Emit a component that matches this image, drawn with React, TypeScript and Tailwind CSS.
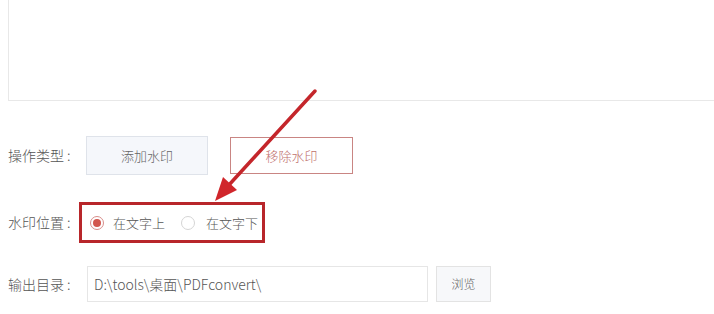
import React from "react";

const font = { fontFamily: '"Microsoft YaHei", "Noto Sans CJK SC", "Noto Sans", sans-serif' };

export default function App() {
  return (
    <div className="relative w-[714px] h-[314px] overflow-hidden bg-white text-[#555] font-light" style={font}>
      <div className="ml-[8px] h-[101px] border-l border-b border-[#e8e8e8]" />

      <div className="mt-[35px] flex items-center pl-[8px] h-[39px]">
        <div className="w-[78px] text-[14px] text-[#555]">操作类型 :</div>
        <div className="w-[122px] h-[39px] flex items-center justify-center bg-[#f5f7fb] border border-[#dfe3ea] text-[13px] text-[#666]">
          添加水印
        </div>
        <div className="ml-[22px] w-[123px] h-[37px] flex items-center justify-center bg-white border border-[#c98583] text-[13px] text-[#c0706c]">
          移除水印
        </div>
      </div>

      <div className="mt-[27px] flex items-center pl-[8px] h-[41px]">
        <div className="w-[82px] text-[14px] text-[#555]">水印位置 :</div>
        <div className="relative flex items-center h-[41px]">
          <div className="absolute left-[-11px] top-0 w-[186px] h-[41px] border-[3px] border-[#b8262a]" />
          <span className="w-[14px] h-[14px] rounded-full border border-[#d88d8a] flex items-center justify-center">
            <span className="w-[8px] h-[8px] rounded-full bg-[#d2574f]" />
          </span>
          <span className="ml-[9px] text-[13px] text-[#555]">在文字上</span>
          <span className="ml-[16px] w-[14px] h-[14px] rounded-full border border-[#d5d5d5]" />
          <span className="ml-[11px] text-[13px] text-[#555]">在文字下</span>
        </div>
      </div>

      <div className="mt-[23px] flex items-center pl-[8px] h-[36px]">
        <div className="w-[79px] text-[14px] text-[#555]">输出目录 :</div>
        <div className="w-[341px] h-[36px] flex items-center pl-[6px] border border-[#e6e6e6] text-[14px] text-[#555]">
          D:\tools\桌面\PDFconvert\
        </div>
        <div className="ml-[8px] w-[55px] h-[36px] flex items-center justify-center bg-[#f7f8fa] border border-[#e3e3e3] text-[12px] text-[#666]">
          浏览
        </div>
      </div>

      <svg className="absolute left-0 top-0 pointer-events-none" width="714" height="314" viewBox="0 0 714 314">
        <line x1="315" y1="91" x2="228" y2="186" stroke="#c4262b" strokeWidth="3.5" strokeLinecap="round" />
        <polygon points="215,201 223,177 237,190" fill="#d0262b" />
      </svg>
    </div>
  );
}
